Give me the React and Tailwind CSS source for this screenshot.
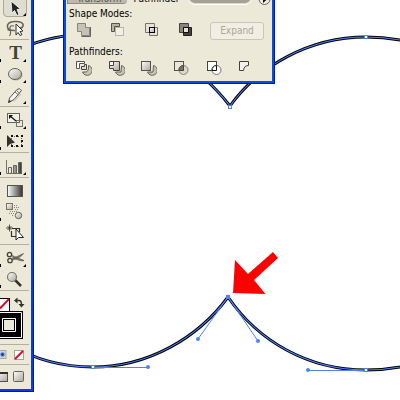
import React, { useState } from 'react';

const INK = '#33312b';

const toolGroups = [
  [
    { id: 'direct', label: 'Direct Selection', menu: true, icon: <DirectIcon /> },
    { id: 'lasso', label: 'Lasso', icon: <LassoIcon /> },
  ],
  [
    { id: 'type', label: 'Type', menu: true, left: true, icon: null },
    { id: 'ellipse', label: 'Ellipse', menu: true, left: true, icon: <EllipseIcon /> },
    { id: 'pencil', label: 'Pencil', menu: true, icon: <PencilIcon /> },
  ],
  [
    { id: 'scale', label: 'Scale', menu: true, left: true, icon: <ScaleIcon /> },
    { id: 'transform', label: 'Free Transform', left: true, icon: <TransformIcon /> },
  ],
  [{ id: 'graph', label: 'Column Graph', menu: true, left: true, icon: <GraphIcon /> }],
  [
    { id: 'gradient', label: 'Gradient', icon: <GradientIcon /> },
    { id: 'blend', label: 'Blend', left: true, icon: <BlendIcon /> },
    { id: 'paint', label: 'Live Paint Selection', icon: <PaintIcon /> },
  ],
  [
    { id: 'scissors', label: 'Scissors', menu: true, left: true, icon: <ScissorsIcon /> },
    { id: 'zoom', label: 'Zoom', left: true, icon: <ZoomIcon /> },
  ],
];

function DirectIcon() {
  return (
    <path d="M11 5L12 17L14.5 14.5L17 19.5L19 18.5L17 13.5L20.5 13Z" fill="#222" stroke="#fff" strokeWidth=".8" />
  );
}

function LassoIcon() {
  return (
    <>
      <path d="M15 13.5C5 14 5 5 14 4.5C20 4 24 6 23 9C22.5 11 21 11 20 11" fill="none" stroke="#66635a" strokeWidth="1.5" />
      <path d="M14 9C10 8 9 10 10.500 14Q11 17 9.500 19M7.500 13L12 13.500" fill="none" stroke="#66635a" strokeWidth="1.2" />
      <path d="M16 7V18L18 15.5L20 18.5L22 17.5L20 14.5L23 14Z" fill="#fff" stroke={INK} />
    </>
  );
}

function EllipseIcon() {
  return (
    <>
      <ellipse cx="16" cy="12" rx="6.500" ry="5.500" fill="#b5b2a8" />
      <ellipse cx="15" cy="11" rx="6.500" ry="5.500" fill="url(#chrome)" stroke="#66635a" />
    </>
  );
}

function PencilIcon() {
  return (
    <>
      <path d="M8.500 18.500L9.500 14L17 5.500Q19.500 3.500 21.500 6.500L14 15.500Z" fill="#f6f5ee" stroke="#55534b" />
      <path d="M15 8L18.500 11M16.500 6.500L20 9.500" stroke="#77746a" fill="none" />
      <path d="M8 19L9.500 16L11.500 17.500Z" fill={INK} />
      <path d="M14 17.500L21 10" stroke="#bdbaae" />
    </>
  );
}

function ScaleIcon() {
  return (
    <>
      <rect x="7.5" y="4.5" width="12" height="9" fill="#f4f2e8" stroke="#66635a" />
      <rect x="16.5" y="11.5" width="6" height="6" fill="none" stroke="#77746a" />
      <path d="M10 7L16 12" stroke="#111" strokeWidth="1.2" />
      <path d="M9 6H13L9 10Z" fill="#111" />
    </>
  );
}

function TransformIcon() {
  return (
    <>
      <path d="M14 6.500h5M14 16.500h5M21.500 8v7M11.500 8v7" stroke="#66635a" strokeDasharray="1 1" />
      <path d="M11 5h2v2h-2zM16 5h2v2h-2zM21 5h2v2h-2zM11 15h2v2h-2zM16 15h2v2h-2zM21 15h2v2h-2zM21 10h2v2h-2z" fill="#111" />
      <path d="M7 5V17L10 14L15 12.500Z" fill={INK} />
    </>
  );
}

function GraphIcon() {
  return (
    <>
      <path d="M6.5 5V18.5H22" fill="none" stroke="#77746a" />
      <path d="M8.5 12.5h3v6h-3zM13.5 10.5h3v8h-3zM18.5 7.5h3v11h-3z" fill="url(#bars)" stroke="#66635a" />
    </>
  );
}

function GradientIcon() {
  return <rect x="7.5" y="5.5" width="15" height="11" fill="url(#bars)" stroke="#55534b" />;
}

function BlendIcon() {
  return (
    <>
      <rect x="6.5" y="2.5" width="6" height="6" fill="url(#chrome)" stroke="#77746a" />
      <path d="M14 4.5h4M14 6.5h5M15 8.5h4M10 10.5h8M9 12.5h6M12 14.5h2" stroke="#88857a" strokeDasharray="1 1" />
      <circle cx="18.5" cy="14.5" r="3.2" fill="url(#chrome)" stroke="#66635a" />
    </>
  );
}

function PaintIcon() {
  return (
    <>
      <path d="M12 6.5H19.5V10M11.5 9V14.5H16" fill="none" stroke={INK} strokeWidth="1.2" />
      <path d="M9.5 2.500v7M6 6h7M7.500 4l4 4M11.500 4l-4 4" stroke={INK} strokeWidth=".8" />
      <path d="M16 7V18L18.500 15.500H23.500Z" fill="#fff" stroke="#222" />
    </>
  );
}

function ScissorsIcon() {
  return (
    <>
      <path d="M12 8.500L24 13.500Q22 15 12.500 10.500M12 12L23.500 6.500Q21.500 10 13 13" fill="#8a877c" stroke="#55534b" strokeWidth=".7" />
      <circle cx="9.500" cy="7.500" r="2.200" fill="none" stroke="#44423a" strokeWidth="1.300" />
      <circle cx="10" cy="13.500" r="2.200" fill="none" stroke="#44423a" strokeWidth="1.300" />
    </>
  );
}

function ZoomIcon() {
  return (
    <>
      <path d="M15 12L21 18" stroke={INK} strokeWidth="2.500" />
      <circle cx="12" cy="9" r="4.500" fill="url(#chrome)" stroke="#77746a" strokeWidth="1.200" />
    </>
  );
}

function Separator() {
  return <div className="mt-px mb-0.5 mr-0.5 h-px bg-[#b3b0a2]" />;
}

function ToolButton({ tool, active, onSelect }) {
  return (
    <button
      aria-label={tool.label}
      aria-pressed={active}
      onClick={onSelect}
      className="relative block h-[21px] w-full"
    >
      {active && (
        <span className="absolute inset-y-0 left-[3px] right-1 rounded-sm border border-[#aaa79b] bg-[#dfddd0]" />
      )}
      {tool.id === 'type' && (
        <span className="absolute inset-0 text-center font-['Liberation_Serif',serif] text-[19px] font-bold leading-[22px] text-[#44423a]">
          T
        </span>
      )}
      <svg className="relative h-[21px] w-[31px]" viewBox="0 0 31 21">
        {tool.icon}
        {tool.menu && <path d="M26 17V20H23Z" fill="#000" />}
        {tool.left && <path d="M0 17h1v3h-1z" fill="#000" />}
      </svg>
    </button>
  );
}

function Toolbox() {
  const [active, setActive] = useState('direct');

  return (
    <aside className="absolute left-0 top-0 w-[34px] border-b border-r border-[#0019a5]">
      <div className="overflow-hidden border-b-2 border-r-2 border-[#0b3fdc] bg-[#ece9d8]">
        <div className="-mt-1">
          {toolGroups.map((group, i) => (
            <div key={i}>
              {group.map((tool) => (
                <ToolButton
                  key={tool.id}
                  tool={tool}
                  active={tool.id === active}
                  onSelect={() => setActive(tool.id)}
                />
              ))}
              <Separator />
            </div>
          ))}
        </div>

        <button aria-label="Fill and stroke" className="block h-[50px] w-full">
          <svg className="h-[50px] w-[31px]" viewBox="0 0 31 50">
            <rect x="-8" y="5.5" width="17.5" height="20" fill="#fff" stroke="#000" />
            <path d="M0 15.500L9 6" stroke="#d4112b" strokeWidth="2" />
            <path d="M17 7.500H19Q21.500 7.500 21.500 12" fill="none" stroke={INK} strokeWidth="1.500" />
            <path d="M14 7.500L17.500 4.500V10.500ZM18.500 11H24.500L21.500 14.500Z" fill={INK} />
            <path d="M-5 18h28v28h-28z" fill="#000" />
            <path d="M-5 19.5H21.5V44.5H-5" fill="none" stroke="#fff" />
            <path d="M2.5 25.5h13v13h-13z" fill="#000" stroke="#fff" />
            <path d="M4 27h10v10h-10z" fill="#ece9d8" />
          </svg>
        </button>
        <Separator />

        <div className="flex h-4 items-center">
          <button aria-label="Gradient fill" className="h-4 w-[14px]">
            <svg className="h-4 w-[14px]" viewBox="0 0 14 16">
              <rect x="-4" y="3.5" width="10" height="8" fill="#cfd6e0" stroke="#a9ab9f" />
              <circle cx="2.500" cy="7.500" r="2" fill="#24408c" stroke="#7e9fe0" />
            </svg>
          </button>
          <button aria-label="No fill" className="h-4 w-[11px]">
            <svg className="h-4 w-[11px]" viewBox="0 0 11 16">
              <rect x=".5" y="3.5" width="9" height="9" fill="#fff" stroke="#a5a298" />
              <path d="M1 12L9 4" stroke="#d4112b" strokeWidth="2" />
            </svg>
          </button>
        </div>
        <Separator />

        <div className="flex h-[22px]">
          <button aria-label="Full screen with menu" className="w-[13px]">
            <svg className="h-[22px] w-[13px]" viewBox="0 0 13 22">
              <rect x="-4" y="5.5" width="11.5" height="9" fill="url(#chrome)" stroke="#55534b" />
              <path d="M0 6h8" stroke={INK} strokeWidth="2" />
            </svg>
          </button>
          <button aria-label="Full screen" className="w-3">
            <svg className="h-[22px] w-3" viewBox="0 0 12 22">
              <rect x=".5" y="4.5" width="10" height="10" rx="1" fill="url(#chrome)" stroke="#66635a" />
            </svg>
          </button>
        </div>
      </div>
    </aside>
  );
}

const shapeModes = [
  {
    label: 'Add to shape area',
    art: (
      <>
        <path d="M1.5 1.5h8v4h4v8h-8v-4h-4z" fill="#c4c2b9" stroke="#88857a" />
        <path d="M14.5 5v9.500H5.500" fill="none" stroke="#66635a" />
      </>
    ),
  },
  {
    label: 'Subtract from shape area',
    art: (
      <>
        <path d="M1.5 1.5h8v3h-5v5h-3z" fill="#b5b2a8" stroke="#55534b" />
        <rect x="5.5" y="5.5" width="8" height="8" fill="#f1efe6" stroke="#b9b6a8" />
      </>
    ),
  },
  {
    label: 'Intersect shape areas',
    art: (
      <>
        <path d="M1.5 1.5h9v9h-9z" fill="#e6e3d6" stroke="#77746a" />
        <path d="M5.5 5.5h8v8h-8z" fill="#e6e3d6" stroke="#77746a" />
        <rect x="5.5" y="5.5" width="5" height="5" fill="url(#chrome)" stroke="#000" />
      </>
    ),
  },
  {
    label: 'Exclude overlapping shape areas',
    art: (
      <>
        <path d="M1.5 1.5h9v9h-9z" fill="#88857c" stroke="#44423a" />
        <path d="M5.500 5.500h8v8h-8z" fill="#44423a" stroke="#22211d" />
        <rect x="5.5" y="5.5" width="5" height="5" fill="#e6e3d6" stroke="#111" />
      </>
    ),
  },
];

const pathfinders = [
  {
    label: 'Divide',
    art: (
      <>
        <path d="M12.500 5.500A5 5 0 1 1 6.500 12H10Q13 11 12.500 5.500" fill="#c6c3b7" stroke="#66635a" />
        <path d="M.5 1.5h8v2h-5v5h-3z" fill="#fff" stroke="#55534b" />
        <path d="M5.5 9.500V6.500h3v-2h2v5z" fill="#dedbd0" stroke="#44423a" />
      </>
    ),
  },
  {
    label: 'Trim',
    art: (
      <>
        <path d="M12.500 5.500A5 5 0 1 1 6.500 12H12Z" fill="#c6c3b7" stroke="#66635a" />
        <path d="M.5 1.5h10v9h-6v-2h-4z" fill="url(#chrome)" stroke="#44423a" />
        <path d="M1 2h3v3h-3z" fill="#fff" />
        <path d="M4.5 2v3.5H1" fill="none" stroke="#44423a" />
      </>
    ),
  },
  {
    label: 'Merge',
    art: (
      <>
        <path d="M12.500 5.500A5 5 0 1 1 6.500 12H12Z" fill="#c6c3b7" stroke="#66635a" />
        <path d="M12.500 8Q14 12 8.500 13" fill="none" stroke="#88857a" />
        <rect x=".5" y="1.5" width="9" height="9" fill="url(#chrome)" stroke="#55534b" />
      </>
    ),
  },
  {
    label: 'Crop',
    art: (
      <>
        <rect x=".5" y="1.5" width="9" height="9" fill="#e9e7dd" stroke="#55534b" />
        <circle cx="9.5" cy="10" r="4.500" fill="#d9d6ca" stroke="#88857a" />
        <path d="M9.5 5.500V10.500H5A4.500 4.500 0 0 1 9.500 5.500" fill="#77746a" stroke="#44423a" />
      </>
    ),
  },
  {
    label: 'Outline',
    art: (
      <>
        <rect x=".5" y="1.5" width="9" height="9" fill="#fff" stroke="#44423a" />
        <circle cx="9.5" cy="10" r="4.500" fill="#fff" stroke="#77746a" />
        <path d="M9.5 5.500V10.500H5A4.500 4.500 0 0 1 9.500 5.500" fill="#fff" stroke="#111" />
      </>
    ),
  },
  {
    label: 'Minus back',
    art: <path d="M.5 1.5h9v4Q5 5.500 4.500 10.500h-4z" fill="#f4f2ea" stroke="#44423a" />,
  },
];

function ShapeButtons({ items }) {
  return items.map((item) => (
    <button key={item.label} aria-label={item.label} className="h-4 w-[34px]">
      <svg className="h-4 w-4" viewBox="0 0 16 16">
        {item.art}
      </svg>
    </button>
  ));
}

function PathfinderPanel() {
  return (
    <section className="absolute left-[63px] top-0 w-[212px] border-x border-b border-[#0019a5] text-[10px] leading-4 text-black">
      <div className="overflow-hidden border-x-2 border-b-2 border-[#0b4be4] bg-[#ece9d8]">
        <div className="-mt-[11px] flex h-4 items-start">
          <button className="ml-px w-[60px] rounded-br-sm border-b border-l border-[#8f8c80] bg-[#bdbaad] pt-1.5 pl-1 leading-2 text-[#55534b]">
            Transform
          </button>
          <button className="ml-1 w-[52px] pt-1.5 leading-2">Pathfinder</button>
          <span className="ml-1.5 h-[15px] w-[64px] rounded-full border border-[#d9d6ca] bg-[#a5a295] shadow-[0_1px_0_#fff]" />
          <button aria-label="Panel menu" className="ml-1.5">
            <svg className="h-4 w-3.5" viewBox="0 0 14 16">
              <circle cx="6.5" cy="10" r="5.5" fill="#efede2" stroke="#66635a" />
              <path d="M5 7L9 10.500L5 14Z" fill="#111" />
            </svg>
          </button>
        </div>

        <div className="pt-px pl-[3px]">
          <h2>Shape Modes:</h2>
          <div className="flex h-[18px] pl-[7px]">
            <ShapeButtons items={shapeModes} />
            <button
              disabled
              className="-ml-0.5 w-[54px] rounded-[3px] border border-[#c9c6b6] bg-[#f1efe4] text-[#aaa795]"
            >
              Expand
            </button>
          </div>
          <h2 className="mt-1">Pathfinders:</h2>
          <div className="flex h-[21px] pl-[7px]">
            <ShapeButtons items={pathfinders} />
          </div>
        </div>
      </div>
    </section>
  );
}

const outlines = [
  'M20 49C42 39 68 34 93 34C150 34 199 66 230 106C258 67 308 37 366 37C389 37 410 41 430 47',
  'M10 345C34 359 62 367 93 367C148 367 198 338 228 297C258 341 308 370 366 370C389 370 410 366 430 359',
];

function Artwork() {
  return (
    <svg className="absolute left-0 top-0 h-[400px] w-[430px]" viewBox="0 0 430 400">
      <defs>
        <linearGradient id="chrome" x2="1" y2="1">
          <stop stopColor="#fff" />
          <stop offset="1" stopColor="#a9a69b" />
        </linearGradient>
        <linearGradient id="bars">
          <stop stopColor="#fff" />
          <stop offset="1" stopColor="#33312b" />
        </linearGradient>
      </defs>
      {outlines.map((d) => (
        <g key={d} fill="none">
          <path d={d} stroke="#000" strokeWidth="3" />
          <path d={d} stroke="#4f80ff" strokeWidth="1.1" />
        </g>
      ))}
      {/* direction handles */}
      <g stroke="#4f80ff" fill="none">
        <path d="M93 367.5H148M366 370.5H308M228 297L198 339M228 297L258 341" />
      </g>
      <g fill="#4f80ff">
        <circle cx="148" cy="367" r="2" />
        <circle cx="308" cy="370" r="2" />
        <circle cx="198" cy="339" r="2" />
        <circle cx="258" cy="341" r="2" />
        <rect x="226" y="295" width="4" height="4" />
      </g>
      <g fill="#fff" stroke="#4f80ff">
        <rect x="228.5" y="105.5" width="3" height="3" />
        <rect x="364.5" y="35.5" width="3" height="3" />
        <rect x="91.5" y="365.5" width="3" height="3" />
        <rect x="364.5" y="368.5" width="3" height="3" />
      </g>
      <path d="M233 293L235 260L248 274L273 252L278 258L254 280L265.5 294Z" fill="#f00" />
    </svg>
  );
}

export default function App() {
  return (
    <main className="relative h-screen overflow-hidden bg-white font-['DejaVu_Sans_Condensed','DejaVu_Sans',sans-serif]">
      <Artwork />
      <Toolbox />
      <PathfinderPanel />
    </main>
  );
}
